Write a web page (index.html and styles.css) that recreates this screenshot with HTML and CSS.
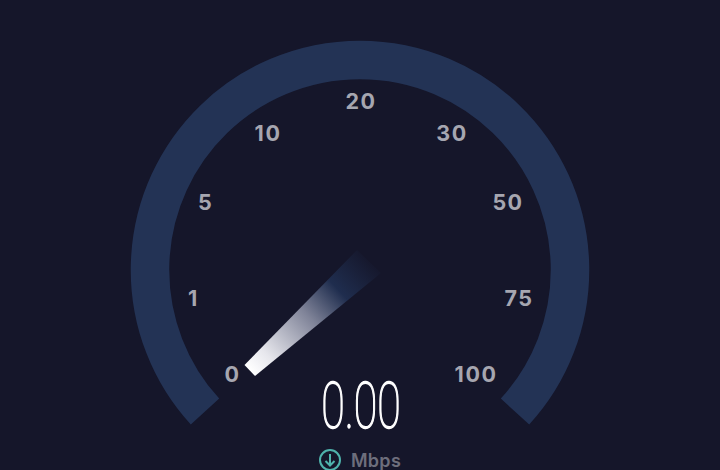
FILE: index.html
```html
<!DOCTYPE html>
<html lang="en">
<head>
    <meta charset="UTF-8">
    <title>Speed Test</title>
    <link rel="stylesheet" href="styles.css">
</head>
<body>
    <svg class="gauge" viewBox="0 0 720 470" width="720" height="470">
        <defs>
            <linearGradient id="needleFill" gradientUnits="userSpaceOnUse" x1="250" y1="370" x2="372" y2="258">
                <stop offset="0" stop-color="#ffffff"/>
                <stop offset="0.14" stop-color="#e6e6ec"/>
                <stop offset="0.48" stop-color="#7f8398"/>
                <stop offset="0.72" stop-color="#1f2d4e"/>
                <stop offset="1" stop-color="#1f2d4e" stop-opacity="0"/>
            </linearGradient>
        </defs>

        <path class="track" d="M 205 411.6 A 210 210 0 1 1 515 411.6"/>
        <polygon class="needle" points="244.5,365 255,376 381,273 357,250"/>

        <text class="tick" x="232.5" y="374">0</text>
        <text class="tick" x="193.5" y="298">1</text>
        <text class="tick" x="205.5" y="202">5</text>
        <text class="tick" x="268" y="133">10</text>
        <text class="tick" x="361" y="101">20</text>
        <text class="tick" x="452" y="133">30</text>
        <text class="tick" x="508" y="202">50</text>
        <text class="tick" x="519" y="298">75</text>
        <text class="tick" x="476" y="374">100</text>

        <text class="reading" x="0" y="0" transform="translate(361 428) scale(0.66 1)">0.00</text>

        <g class="down-icon">
            <circle cx="330" cy="460" r="10"/>
            <path d="M330 454 V465 M325.5 461 L330 465.5 L334.5 461"/>
        </g>
        <text class="unit" x="376" y="460">Mbps</text>
    </svg>
</body>
</html>
```

FILE: styles.css
```css
* {
    box-sizing: border-box;
    margin: 0;
    padding: 0;
}

html, body {
    height: 100%;
    overflow: hidden;
    background-color: #15162a;
}

.gauge {
    display: block;
}

.track {
    fill: none;
    stroke: #233355;
    stroke-width: 38.5px;
}

.needle {
    fill: url(#needleFill);
}

.tick {
    fill: #a6a6b0;
    font-family: "Inter", "DejaVu Sans", sans-serif;
    font-size: 21.5px;
    font-weight: 700;
    letter-spacing: 1.5px;
    text-anchor: middle;
    dominant-baseline: central;
}

.reading {
    fill: #ffffff;
    font-family: "Roboto", "Liberation Sans", sans-serif;
    font-size: 65px;
    font-weight: 100;
    text-anchor: middle;
    stroke: #ffffff;
    stroke-width: 1.4px;
}

.down-icon {
    fill: none;
    stroke: #4fb2ac;
    stroke-width: 2px;
}

.unit {
    fill: #6d6e7c;
    font-family: "Inter", "DejaVu Sans", sans-serif;
    font-size: 18px;
    font-weight: 600;
    letter-spacing: 0.3px;
    text-anchor: middle;
    dominant-baseline: central;
}
```
